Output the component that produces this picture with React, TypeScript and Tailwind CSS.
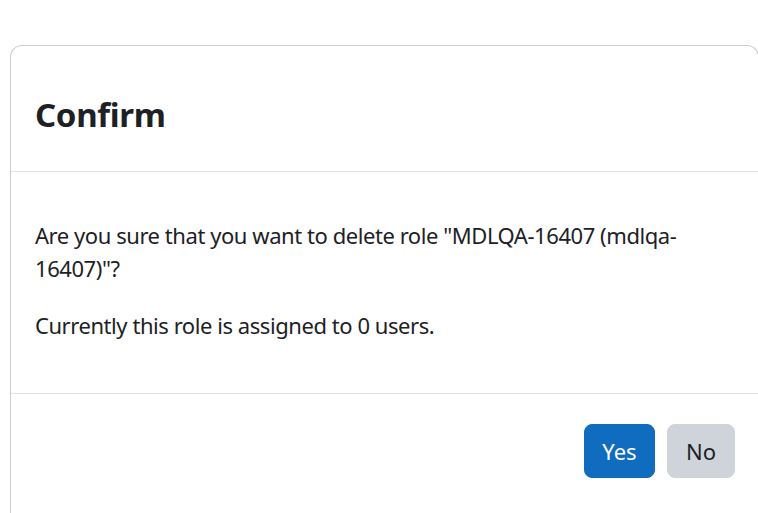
import React from 'react';

export default function App() {
  return (
    <div
      className="h-[513px] w-[758px] overflow-hidden bg-white text-[#1d2125]"
      style={{ fontFamily: '"Noto Sans", "Open Sans", Arial, sans-serif' }}
    >
      <div className="ml-[10px] mt-[45px] w-[749px] rounded-t-[12px] border border-b-0 border-[#cccccc] bg-white">
        {/* header */}
        <div className="border-b border-[#dee2e6] px-[24px] pb-[36px] pt-[49px]">
          <h5 className="text-[33px] font-bold leading-[40px] tracking-[-0.01em]">Confirm</h5>
        </div>

        {/* body */}
        <div className="flex flex-col gap-[24px] border-b border-[#dee2e6] px-[24px] pb-[51px] pt-[47px] text-[22px] leading-[33px] tracking-[-0.02em]">
          <p>Are you sure that you want to delete role "MDLQA-16407 (mdlqa-16407)"?</p>
          <p>Currently this role is assigned to 0 users.</p>
        </div>

        {/* footer */}
        <div className="flex justify-end gap-[12px] pb-[60px] pr-[23px] pt-[30px]">
          <button className="flex h-[54px] w-[71px] items-center justify-center rounded-[8px] border border-[#0f6cbf] bg-[#0f6cbf] text-[22px] text-white">
            Yes
          </button>
          <button className="flex h-[54px] w-[68px] items-center justify-center rounded-[8px] border border-[#ced4da] bg-[#ced4da] text-[22px] text-[#1d2125]">
            No
          </button>
        </div>
      </div>
    </div>
  );
}
